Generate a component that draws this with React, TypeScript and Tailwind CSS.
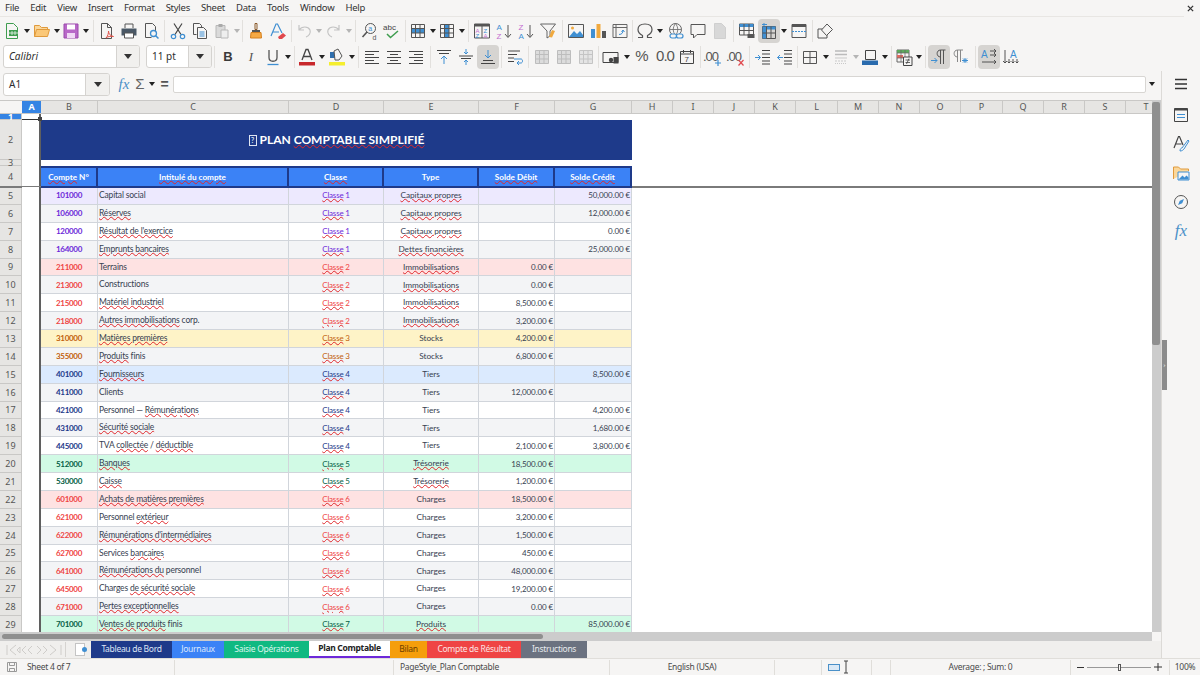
import React from "react";

const BLUE = "#3f8fd2";
const DARK = "#3d3d3d";

// icon frame, 18x18 drawing box
const I = ({ children }: { children: React.ReactNode }) => (
  <svg viewBox="0 0 18 18" className="w-[18px] h-[18px] overflow-visible" fill="none" stroke={DARK} strokeWidth="1">
    {children}
  </svg>
);

const Btn = ({ children, on }: { children: React.ReactNode; on?: boolean }) => (
  <div className={`w-[22px] h-[24px] shrink-0 flex items-center justify-center rounded ${on ? "bg-[#d6d4d1]" : ""}`}>
    {children}
  </div>
);

const Arrow = ({ w = "w-[8px]", off }: { w?: string; off?: boolean }) => (
  <div className={`${w} shrink-0 flex items-center justify-center`}>
    <svg viewBox="0 0 6 4" className="w-[6px] h-[4px]">
      <path d="M0 0h6L3 4z" fill={off ? "#b5b5b5" : "#222"} />
    </svg>
  </div>
);

const Sep = ({ w }: { w: string }) => (
  <div className={`${w} shrink-0 flex justify-center`}>
    <div className="w-px h-[22px] bg-[#e2e0dd]" />
  </div>
);

const Grid = ({ fill, stroke = "#555" }: { fill?: React.ReactNode; stroke?: string }) => (
  <I>
    {fill}
    <path d="M2.5 2.5h13v13h-13zM2.5 6.5h13M2.5 11h13M6.500 2.5v13M11 2.5v13" stroke={stroke} />
  </I>
);

const Lines = ({ d }: { d: string }) => (
  <I>
    <path d={d} stroke="#444" />
  </I>
);

const Toolbar1 = () => (
  <div className="flex items-center h-[27px] pl-[1px]">
    <Btn>
      <I>
        <path d="M3.5 1.5h7l4 4v11h-11z" stroke="#3f9d4f" />
        <path d="M6 8h9v6H6z" fill="#3f9d4f" stroke="none" />
        <path d="M9 9v4M12 9v4M6 11h9" stroke="#fff" strokeWidth=".7" />
      </I>
    </Btn>
    <Arrow />
    <Btn>
      <I>
        <path d="M1.5 14.5v-11h5l2 2h6v2" stroke="#e09a3c" fill="#fbd79a" />
        <path d="M1.5 14.5l2-7h13l-2 7z" stroke="#e09a3c" fill="#fbc878" />
      </I>
    </Btn>
    <Arrow w="w-[7px]" />
    <Btn>
      <I>
        <path d="M2 2h14v14H2z" fill="#b868c8" stroke="#9a48ab" />
        <path d="M5 2.5h8v5H5z" fill="#fff" stroke="none" />
        <path d="M5 11h8v5H5z" fill="#f0d8f5" stroke="none" />
      </I>
    </Btn>
    <Arrow />
    <Sep w="w-[6px]" />
    <Btn>
      <I>
        <path d="M3.5 1.5h6l4 4v11h-10z" stroke="#555" />
        <path d="M9.5 1.5v4h4" stroke="#555" />
        <path d="M8 16c2-2 2.5-5 2.5-7 0 3 2 5 5 5.5-3-.5-6 0-7.5 1.5z" stroke="#e0534a" />
      </I>
    </Btn>
    <Btn>
      <I>
        <path d="M5 6V2h8v4" stroke="#555" />
        <path d="M1.5 6.5h15v7h-15z" fill="#4a5866" stroke="none" />
        <path d="M4.5 11h9v5h-9z" fill="#fff" stroke="#555" />
      </I>
    </Btn>
    <Btn>
      <I>
        <path d="M3.5 1.5h7l3 3v5M3.5 1.5v14h6" stroke="#555" />
        <circle cx="11.5" cy="11.5" r="3" stroke={BLUE} strokeWidth="1.3" />
        <path d="M13.5 13.5l3 3" stroke={BLUE} strokeWidth="1.5" />
      </I>
    </Btn>
    <Sep w="w-[5px]" />
    <Btn>
      <I>
        <path d="M5 1.5l7 11M13 1.5l-7 11" stroke="#444" strokeWidth="1.2" />
        <circle cx="4.5" cy="14.5" r="2.2" stroke={BLUE} strokeWidth="1.2" />
        <circle cx="13.5" cy="14.5" r="2.2" stroke={BLUE} strokeWidth="1.2" />
      </I>
    </Btn>
    <Btn>
      <I>
        <path d="M2.5 1.5h6l2 2v2M2.5 1.5v11h3" stroke="#555" />
        <path d="M6.5 5.5h6l3 3v8h-9z" fill="#f6f5f4" stroke="#555" />
        <path d="M8.5 10h5M8.5 12h5M8.5 14h5" stroke={BLUE} />
      </I>
    </Btn>
    <Btn>
      <I>
        <path d="M3 3.5h9v12H3z" stroke="#b8b8b8" fill="#dadada" />
        <path d="M5.5 2h4v3h-4z" fill="#aaa" stroke="none" />
        <path d="M8 8h7v8H8z" fill="#eee" stroke="#b8b8b8" />
      </I>
    </Btn>
    <Arrow w="w-[7px]" off />
    <Sep w="w-[5px]" />
    <Btn>
      <I>
        <path d="M8 1.5h2v6H8z" stroke="#8a5a2b" />
        <path d="M5 8h8v2H5z" fill="#555" stroke="none" />
        <path d="M4 10.5h10l.5 5.5h-11z" fill="#f6a944" stroke="#d5801f" />
      </I>
    </Btn>
    <Btn>
      <I>
        <path d="M2 14L7 2h1.5L13 11M4 10h6" stroke={BLUE} strokeWidth="1.2" />
        <path d="M9 15l5-4 3 2.5-4 3.5h-3z" fill="#e0484d" stroke="none" />
      </I>
    </Btn>
    <Sep w="w-[4px]" />
    <Btn>
      <I>
        <path d="M4 3v5h5M4 8c3-4 9-4 11 0 1 3-1 6-4 7" stroke="#c4c4c4" strokeWidth="1.2" />
      </I>
    </Btn>
    <Arrow off />
    <Btn>
      <I>
        <path d="M14 3v5H9M14 8C11 4 5 4 3 8c-1 3 1 6 4 7" stroke="#c4c4c4" strokeWidth="1.2" />
      </I>
    </Btn>
    <Arrow w="w-[7px]" off />
    <Sep w="w-[7px]" />
    <Btn>
      <I>
        <circle cx="9.5" cy="6.5" r="5" stroke="#555" />
        <path d="M6 10l-4.500 5" stroke="#555" strokeWidth="1.6" />
        <text x="7.300" y="9" fontSize="7" fill={BLUE} stroke="none" fontFamily="Liberation Sans">a</text>
        <text x="11.5" y="17.5" fontSize="7" fill="#555" stroke="none" fontFamily="Liberation Sans">d</text>
      </I>
    </Btn>
    <Btn>
      <I>
        <text x="0" y="8" fontSize="8" fill="#444" stroke="none" fontFamily="Liberation Sans">abc</text>
        <path d="M4 12l3.5 3.5L15 9" stroke="#3f9d4f" strokeWidth="1.5" />
      </I>
    </Btn>
    <Sep w="w-[4px]" />
    <Btn>
      <Grid fill={<path d="M2.5 6.5h13V11h-13z" fill={BLUE} stroke="none" />} />
    </Btn>
    <Arrow w="w-[7px]" />
    <Btn>
      <Grid fill={<path d="M6.5 2.5H11v13H6.5z" fill={BLUE} stroke="none" />} />
    </Btn>
    <Arrow w="w-[7px]" />
    <Sep w="w-[6px]" />
    <Btn>
      <I>
        <path d="M1.5 2h15v14h-15zM9 2v14" stroke="#555" />
        <path d="M1.5 2h15v2.5h-15z" fill="#555" stroke="none" />
        <text x="2.5" y="10.5" fontSize="6" fill="#c36bd0" stroke="none" fontFamily="Liberation Sans">A</text>
        <text x="2.5" y="15.5" fontSize="6" fill={BLUE} stroke="none" fontFamily="Liberation Sans">Z</text>
        <text x="10.5" y="10.5" fontSize="6" fill={BLUE} stroke="none" fontFamily="Liberation Sans">Z</text>
        <text x="10.5" y="15.5" fontSize="6" fill="#c36bd0" stroke="none" fontFamily="Liberation Sans">A</text>
      </I>
    </Btn>
    <Btn>
      <I>
        <text x="1.5" y="8" fontSize="8" fill={BLUE} stroke="none" fontFamily="Liberation Sans">A</text>
        <text x="1.5" y="16.5" fontSize="8" fill="#c36bd0" stroke="none" fontFamily="Liberation Sans">Z</text>
        <path d="M13 3v12M10 12l3 3.5 3-3.5" stroke="#555" />
      </I>
    </Btn>
    <Btn>
      <I>
        <text x="1.5" y="8" fontSize="8" fill="#c36bd0" stroke="none" fontFamily="Liberation Sans">Z</text>
        <text x="1.5" y="16.5" fontSize="8" fill={BLUE} stroke="none" fontFamily="Liberation Sans">A</text>
        <path d="M13 3v12M10 12l3 3.5 3-3.5" stroke="#555" />
      </I>
    </Btn>
    <Btn>
      <I>
        <path d="M1.5 2h15l-5.500 7v5l-3 2V9z" stroke="#666" />
        <path d="M10 15l3-7 3 1-3 6.500z" fill="#f0a93e" stroke="none" />
      </I>
    </Btn>
    <Sep w="w-[6px]" />
    <Btn>
      <I>
        <path d="M1.5 2.5h15v13h-15z" stroke="#555" />
        <circle cx="5.5" cy="6" r="1.5" fill="#f0a93e" stroke="none" />
        <path d="M2 15l5-6 3 3 3-3 3 4v2z" fill={BLUE} stroke="none" />
      </I>
    </Btn>
    <Btn>
      <I>
        <path d="M2 7h4v9H2z" fill={BLUE} stroke="none" />
        <path d="M7.5 2h4v14h-4z" fill="#f0a93e" stroke="none" />
        <path d="M13 9h4v7h-4z" fill="#555" stroke="none" />
      </I>
    </Btn>
    <Btn>
      <I>
        <path d="M2 2.5h14v13H2zM2 5.5h14M5 2.5v13" stroke="#666" />
        <path d="M8 12.5c3 0 4-2 4-4M10.5 10l1.5-2 1.5 2" stroke={BLUE} />
      </I>
    </Btn>
    <Sep w="w-[3px]" />
    <Btn>
      <I>
        <path d="M2 15.5h4.5v-2C3.5 12 2 10 2 7.5 2 4 5 2 9 2s7 2 7 5.5c0 2.5-1.5 4.5-4.5 6v2H16" stroke="#555" strokeWidth="1.2" />
      </I>
    </Btn>
    <Arrow />
    <div className="w-px shrink-0" />
    <Btn>
      <I>
        <circle cx="8.5" cy="7.5" r="6" stroke="#666" />
        <path d="M2.5 7.5h12M8.5 1.5c-3 4-3 8 0 12M8.5 1.5c3 4 3 8 0 12" stroke="#666" strokeWidth=".8" />
        <rect x="3" y="12" width="6.5" height="4" rx="2" fill="#f6f5f4" stroke={BLUE} strokeWidth="1.2" />
        <rect x="9.5" y="12" width="6.5" height="4" rx="2" fill="#f6f5f4" stroke={BLUE} strokeWidth="1.2" />
      </I>
    </Btn>
    <Btn>
      <I>
        <path d="M2 2.5h14v10H8l-3.5 3.5v-3.5H2z" stroke="#555" />
      </I>
    </Btn>
    <Btn>
      <I>
        <path d="M3.5 1.5h7l4 4v11h-11z" fill="#d8d8d8" stroke="#cfcfcf" />
      </I>
    </Btn>
    <Sep w="w-[5px]" />
    <Btn>
      <I>
        <path d="M1.5 2h14v11h-14z" stroke="#555" />
        <path d="M1.5 2h14v3h-14z" fill={BLUE} stroke="none" />
        <path d="M1.5 8.5h14M6 2v11M11 2v11" stroke="#555" />
        <path d="M9.5 12h7v4h-7z" fill="#555" stroke="none" />
      </I>
    </Btn>
    <Btn on>
      <I>
        <path d="M2.5 4.5h13v12h-13z" stroke="#555" />
        <path d="M2.5 4.5h4v12h-4zM2.5 4.5h13v3h-13z" fill={BLUE} stroke="none" />
        <path d="M2.5 11h13M6.5 4.5v12M11 4.5v12" stroke="#555" />
        <path d="M4 1v3M2 2.5h5" stroke={BLUE} />
      </I>
    </Btn>
    <Arrow w="w-[8px]" />
    <Btn>
      <I>
        <path d="M2 2.5h14v13H2z" stroke="#555" />
        <path d="M2 2.5h14V5H2z" fill="#555" stroke="none" />
        <path d="M2 9.5h14" stroke={BLUE} strokeDasharray="2 1" />
      </I>
    </Btn>
    <Sep w="w-[4px]" />
    <Btn>
      <I>
        <path d="M2 7h9v9H2z" stroke="#555" />
        <path d="M11 2l5.5 5.5-6 6-5-5.500z" fill="#f6f5f4" stroke="#555" />
      </I>
    </Btn>
  </div>
);

const Combo = ({ w, arrowW, label, italic }: { w: string; arrowW: string; label: string; italic?: boolean }) => (
  <div className={`${w} h-[23px] shrink-0 flex bg-white border border-[#d5d3d0] rounded-[3px] overflow-hidden`}>
    <div className={`flex-1 flex items-center pl-[5px] text-[10px] text-[#2e2e2e] ${italic ? "italic" : ""}`}>{label}</div>
    <div className={`${arrowW} bg-[#f1f0ee] border-l border-[#d5d3d0] flex items-center justify-center`}>
      <svg viewBox="0 0 8 5" className="w-[8px] h-[5px]">
        <path d="M0 0h8L4 5z" fill="#333" />
      </svg>
    </div>
  </div>
);

const Toolbar2 = () => (
  <div className="flex items-center h-[25px] pl-[3px]">
    <Combo w="w-[137px]" arrowW="w-[23px]" label="Calibri" italic />
    <div className="w-[6px] shrink-0" />
    <Combo w="w-[66px]" arrowW="w-[23px]" label="11 pt" />
    <Sep w="w-[5px]" />
    <Btn><span className="text-[13px] font-bold text-[#3a3a3a] font-['Liberation_Sans',sans-serif]">B</span></Btn>
    <div className="w-px shrink-0" />
    <Btn><span className="text-[13px] italic text-[#555] font-['Liberation_Serif',serif]">I</span></Btn>
    <Btn>
      <I>
        <path d="M5 2v7.5c0 5 8 5 8 0V2" stroke="#555" strokeWidth="1.3" />
        <path d="M3.5 16.5h11" stroke={BLUE} strokeWidth="1.3" />
      </I>
    </Btn>
    <Arrow />
    <Sep w="w-[4px]" />
    <Btn>
      <I>
        <path d="M4 12L8 1.5h2L14 12M5.5 8.5h7" stroke="#444" strokeWidth="1.3" />
        <path d="M1 14h16v3.5H1z" fill="#c8282c" stroke="none" />
      </I>
    </Btn>
    <Arrow />
    <Btn>
      <I>
        <path d="M2 4h5v6H2z" fill="#2f6fae" stroke="none" />
        <path d="M6 3l4-2 4 7-3 4H7z" fill="#f6f5f4" stroke="#555" />
        <path d="M1 14h16v3.5H1z" fill="#f5ee2e" stroke="none" />
      </I>
    </Btn>
    <Arrow />
    <Sep w="w-[5px]" />
    <Btn><Lines d="M2 3.5h14M2 6.5h9M2 9.5h14M2 12.5h9M2 15.5h14" /></Btn>
    <Btn><Lines d="M2 3.5h14M5 6.5h8M2 9.5h14M5 12.5h8M2 15.5h14" /></Btn>
    <Btn><Lines d="M2 3.5h14M7 6.5h9M2 9.5h14M7 12.5h9M2 15.5h14" /></Btn>
    <Sep w="w-[6px]" />
    <Btn>
      <I>
        <path d="M2 2.5h14M4 5.5h10" stroke="#444" />
        <path d="M9 16V8M6 11l3-3 3 3" stroke={BLUE} />
      </I>
    </Btn>
    <Btn>
      <I>
        <path d="M2 8h14M4 10.5h10" stroke="#444" />
        <path d="M9 1v5M7 4l2 2 2-2M9 17v-5M7 14l2-2 2 2" stroke={BLUE} />
      </I>
    </Btn>
    <Btn on>
      <I>
        <path d="M2 15.5h14M4 12.5h10" stroke="#444" />
        <path d="M9 2v8M6 7l3 3 3-3" stroke={BLUE} />
      </I>
    </Btn>
    <Sep w="w-[5px]" />
    <Btn>
      <I>
        <path d="M2 3h12M2 6.5h9M2 10h6M2 13.5h6" stroke="#444" />
        <path d="M8 11h7c2 0 2 4 0 4h-3M13 13l-2 2 2 2" stroke={BLUE} />
      </I>
    </Btn>
    <Sep w="w-[5px]" />
    <Btn><Grid stroke="#bdbdbd" fill={<path d="M2.5 2.5h13v13h-13z" fill="#dcdcdc" stroke="none" />} /></Btn>
    <Btn><Grid stroke="#bdbdbd" fill={<path d="M2.5 2.5h13v13h-13z" fill="#dcdcdc" stroke="none" />} /></Btn>
    <Btn><Grid stroke="#c4c4c4" fill={<path d="M2.5 2.5h13v13h-13z" fill="#e4e4e4" stroke="none" />} /></Btn>
    <Sep w="w-[3px]" />
    <Btn>
      <I>
        <path d="M1 4.5h15v10H1z" stroke="#444" />
        <circle cx="9" cy="12" r="2.2" fill="#444" stroke="none" />
        <path d="M11.5 9h5v6.5h-5z" fill="#444" stroke="none" />
      </I>
    </Btn>
    <Arrow w="w-[9px]" />
    <Btn><span className="text-[15px] text-[#555] font-['Liberation_Sans',sans-serif]">%</span></Btn>
    <div className="w-px shrink-0" />
    <Btn><span className="text-[15px] text-[#555] font-['Liberation_Sans',sans-serif] tracking-[-1px]">0.0</span></Btn>
    <Btn>
      <I>
        <path d="M2.5 3.5h13v12h-13zM2.5 6h13M5.5 2v3M12.5 2v3" stroke="#444" />
        <text x="6.5" y="14" fontSize="8" fill="#444" stroke="none" fontFamily="Liberation Sans">7</text>
      </I>
    </Btn>
    <Sep w="w-[4px]" />
    <Btn>
      <I>
        <text x="-1" y="13" fontSize="13" letterSpacing="-1" fill="#555" stroke="none" fontFamily="Liberation Sans">.00</text>
        <path d="M14 12v6M11 15h6" stroke={BLUE} strokeWidth="1.2" />
      </I>
    </Btn>
    <div className="w-px shrink-0" />
    <Btn>
      <I>
        <text x="-1" y="13" fontSize="13" letterSpacing="-1" fill="#555" stroke="none" fontFamily="Liberation Sans">.00</text>
        <path d="M11.5 12l5 5.5M16.5 12l-5 5.5" stroke="#e0484d" strokeWidth="1.2" />
      </I>
    </Btn>
    <Sep w="w-[5px]" />
    <Btn>
      <I>
        <path d="M8 2.5h8M8 6h8M8 9.5h8M8 13h8M8 16h8" stroke="#444" />
        <path d="M1 9.5h5M4 7l2.5 2.5L4 12" stroke={BLUE} />
      </I>
    </Btn>
    <Btn>
      <I>
        <path d="M8 2.5h8M8 6h8M8 9.5h8M8 13h8M8 16h8" stroke="#444" />
        <path d="M7 9.5H1.5M4 7L1.5 9.5 4 12" stroke={BLUE} />
      </I>
    </Btn>
    <Sep w="w-[3px]" />
    <Btn>
      <I>
        <path d="M2.5 3.5h13v12h-13zM9 3.5v12M2.5 9.5h13" stroke="#555" />
      </I>
    </Btn>
    <Arrow w="w-[9px]" />
    <Btn>
      <I>
        <path d="M3 3h12M3 6.5h12" stroke="#bbb" strokeWidth="1.5" />
        <path d="M3 10h12" stroke="#c9c9c9" />
        <path d="M3 13h12" stroke="#c9c9c9" strokeDasharray="2 1" />
        <path d="M3 15.5h12" stroke="#c9c9c9" strokeDasharray="1 1" />
      </I>
    </Btn>
    <Arrow w="w-[7px]" off />
    <Btn>
      <I>
        <path d="M4.5 2.5h10v9h-10z" stroke="#444" />
        <path d="M1 12.5h16V17H1z" fill="#2a6bad" stroke="none" />
      </I>
    </Btn>
    <Arrow />
    <Sep w="w-[4px]" />
    <Btn>
      <I>
        <path d="M2 2h12v12H2z" stroke="#666" />
        <path d="M2 2h12v3H2z" fill="#5caa5c" stroke="none" />
        <path d="M2 7h6v3H2z" fill="#e06a60" stroke="none" />
        <path d="M2 5h12M2 10h12M6 2v12M10 2v12" stroke="#666" strokeWidth=".7" />
        <path d="M8.5 9H17v8.5H8.5z" fill="#f6f5f4" stroke="#444" />
        <path d="M10.5 12H15M10.5 14.5H15M14 10.5L11.5 16" stroke="#444" strokeWidth=".8" />
      </I>
    </Btn>
    <Arrow />
    <Sep w="w-[5px]" />
    <Btn on>
      <I>
        <path d="M10.5 2v14M13.5 2v14M15.5 2h-5C6 2 6 9 10.5 9" stroke="#555" />
        <path d="M1 12.5h6M4.5 10L7 12.5 4.5 15" stroke={BLUE} />
      </I>
    </Btn>
    <Btn>
      <I>
        <path d="M5.5 2v12M8.5 2v12M11 2H5.5C1 2 1 9 5.500 9" stroke="#888" />
        <path d="M10 12.5h6M13 10v5M11 10.5l4 4M15 10.5l-4 4" stroke={BLUE} />
      </I>
    </Btn>
    <Sep w="w-[6px]" />
    <Btn on>
      <I>
        <text x="1" y="9.5" fontSize="10" fill={BLUE} stroke="none" fontFamily="Liberation Sans">A</text>
        <path d="M10 3h6M10 7h6M14 1l2 2-2 2M14 5l2 2-2 2M2 14h14M14 12l2 2-2 2" stroke="#444" strokeWidth=".9" />
      </I>
    </Btn>
    <Btn>
      <I>
        <text x="8" y="9.5" fontSize="10" fill={BLUE} stroke="none" fontFamily="Liberation Sans">A</text>
        <path d="M3 2v13M1 13l2 2 2-2M7 11v4M5.5 13.5L7 15l1.5-1.5M11 11v4M9.5 13.5L11 15l1.5-1.5M15 11v4M13.5 13.5L15 15l1.5-1.5" stroke="#444" strokeWidth=".9" />
      </I>
    </Btn>
  </div>
);

const FormulaBar = () => (
  <div className="flex items-center h-[26px] pl-[3px] mt-[2px]">
    <Combo w="w-[107px]" arrowW="w-[24px]" label="A1" />
    <div className="w-[6px] shrink-0" />
    <span className="w-[16px] text-center text-[15px] italic text-[#4a90c8] font-['Liberation_Serif',serif]">fx</span>
    <span className="w-[16px] text-center text-[15px] text-[#666] font-['Liberation_Sans',sans-serif]">Σ</span>
    <Arrow />
    <span className="w-[17px] text-center text-[14px] font-bold text-[#555] font-['Liberation_Sans',sans-serif]">=</span>
    <div className="w-[973px] h-[17px] bg-white border border-[#d8d6d3] rounded-[2px]" />
    <Arrow w="w-[12px]" />
  </div>
);

// *...* marks the words the spell checker has underlined
const Spell = ({ text }: { text: string }) => (
  <span>
    {text.split("*").map((part, i) =>
      i % 2 ? (
        <span key={i} className="underline decoration-wavy decoration-[#e0282c] decoration-1 underline-offset-[0px]">
          {part}
        </span>
      ) : (
        part
      )
    )}
  </span>
);

type Rec = { n: number; code: string; label: string; cl: string; type: string; deb: string; cred: string; bg: string; color: string };

const VIOLET = "text-[#6d28d9]";
const RED = "text-[#ef4444]";
const AMBER = "text-[#c2610c]";
const NAVY = "text-[#1e3a8a]";
const GREEN = "text-[#065f46]";
const ALT = "bg-[#f3f4f6]";
const W = "bg-white";

const rows: Rec[] = [
  { n: 5, code: "101000", label: "Capital social", cl: "1", type: "*Capitaux propres*", deb: "", cred: "50,000.00 €", bg: "bg-[#ede9fe]", color: VIOLET },
  { n: 6, code: "106000", label: "*Réserves*", cl: "1", type: "*Capitaux propres*", deb: "", cred: "12,000.00 €", bg: ALT, color: VIOLET },
  { n: 7, code: "120000", label: "*Résultat de l'exercice*", cl: "1", type: "*Capitaux propres*", deb: "", cred: "0.00 €", bg: W, color: VIOLET },
  { n: 8, code: "164000", label: "*Emprunts bancaires*", cl: "1", type: "*Dettes financières*", deb: "", cred: "25,000.00 €", bg: ALT, color: VIOLET },
  { n: 9, code: "211000", label: "Terrains", cl: "2", type: "*Immobilisations*", deb: "0.00 €", cred: "", bg: "bg-[#fee2e2]", color: RED },
  { n: 10, code: "213000", label: "Constructions", cl: "2", type: "*Immobilisations*", deb: "0.00 €", cred: "", bg: ALT, color: RED },
  { n: 11, code: "215000", label: "*Matériel industriel*", cl: "2", type: "*Immobilisations*", deb: "8,500.00 €", cred: "", bg: W, color: RED },
  { n: 12, code: "218000", label: "*Autres immobilisations* corp.", cl: "2", type: "*Immobilisations*", deb: "3,200.00 €", cred: "", bg: ALT, color: RED },
  { n: 13, code: "310000", label: "*Matières premières*", cl: "3", type: "Stocks", deb: "4,200.00 €", cred: "", bg: "bg-[#fef3c7]", color: AMBER },
  { n: 14, code: "355000", label: "*Produits* finis", cl: "3", type: "Stocks", deb: "6,800.00 €", cred: "", bg: ALT, color: AMBER },
  { n: 15, code: "401000", label: "*Fournisseurs*", cl: "4", type: "Tiers", deb: "", cred: "8,500.00 €", bg: "bg-[#dbeafe]", color: NAVY },
  { n: 16, code: "411000", label: "Clients", cl: "4", type: "Tiers", deb: "12,000.00 €", cred: "", bg: ALT, color: NAVY },
  { n: 17, code: "421000", label: "Personnel — *Rémunérations*", cl: "4", type: "Tiers", deb: "", cred: "4,200.00 €", bg: W, color: NAVY },
  { n: 18, code: "431000", label: "*Sécurité sociale*", cl: "4", type: "Tiers", deb: "", cred: "1,680.00 €", bg: ALT, color: NAVY },
  { n: 19, code: "445000", label: "TVA *collectée* / *déductible*", cl: "4", type: "Tiers", deb: "2,100.00 €", cred: "3,800.00 €", bg: W, color: NAVY },
  { n: 20, code: "512000", label: "*Banques*", cl: "5", type: "*Trésorerie*", deb: "18,500.00 €", cred: "", bg: "bg-[#d1fae5]", color: GREEN },
  { n: 21, code: "530000", label: "*Caisse*", cl: "5", type: "*Trésorerie*", deb: "1,200.00 €", cred: "", bg: W, color: GREEN },
  { n: 22, code: "601000", label: "*Achats de matières premières*", cl: "6", type: "Charges", deb: "18,500.00 €", cred: "", bg: "bg-[#fee2e2]", color: RED },
  { n: 23, code: "621000", label: "Personnel *extérieur*", cl: "6", type: "Charges", deb: "3,200.00 €", cred: "", bg: W, color: RED },
  { n: 24, code: "622000", label: "*Rémunérations d'intermédiaires*", cl: "6", type: "Charges", deb: "1,500.00 €", cred: "", bg: ALT, color: RED },
  { n: 25, code: "627000", label: "Services *bancaires*", cl: "6", type: "Charges", deb: "450.00 €", cred: "", bg: W, color: RED },
  { n: 26, code: "641000", label: "*Rémunérations du* personnel", cl: "6", type: "Charges", deb: "48,000.00 €", cred: "", bg: ALT, color: RED },
  { n: 27, code: "645000", label: "Charges *de sécurité sociale*", cl: "6", type: "Charges", deb: "19,200.00 €", cred: "", bg: W, color: RED },
  { n: 28, code: "671000", label: "*Pertes exceptionnelles*", cl: "6", type: "Charges", deb: "0.00 €", cred: "", bg: ALT, color: RED },
  { n: 29, code: "701000", label: "*Ventes de produits* finis", cl: "7", type: "*Produits*", deb: "", cred: "85,000.00 €", bg: "bg-[#d1fae5]", color: GREEN },
];

const columns: [string, string][] = [
  ["B", "w-[57px]"],
  ["C", "w-[191px]"],
  ["D", "w-[95px]"],
  ["E", "w-[95px]"],
  ["F", "w-[76px]"],
  ["G", "w-[77px]"],
  ["H", "w-[41px]"],
  ["I", "w-[41px]"],
  ["J", "w-[41px]"],
  ["K", "w-[41px]"],
  ["L", "w-[42px]"],
  ["M", "w-[41px]"],
  ["N", "w-[41px]"],
  ["O", "w-[41px]"],
  ["P", "w-[42px]"],
  ["Q", "w-[41px]"],
  ["R", "w-[41px]"],
  ["S", "w-[41px]"],
  ["T", "w-[41px]"],
];

const RowHead = ({ n, on, h }: { n: number; on?: boolean; h: string }) => (
  <div
    className={`w-[22px] ${h} shrink-0 flex items-center justify-center border-b border-r border-[#c9c8c6] text-[9px] leading-none ${
      on ? "bg-[#3584e4] text-white font-bold" : "bg-[#e6e5e3] text-[#555]"
    }`}
  >
    {n}
  </div>
);

const ColA = ({ h, selected }: { h: string; selected?: boolean }) => (
  <div className={`w-[19px] ${h} shrink-0 bg-white border-r-2 border-[#5f5f5f] relative ${selected ? "border-b border-b-[#333]" : ""}`}>
    {selected && <div className="absolute right-[-3px] bottom-[-2px] w-[4px] h-[4px] bg-[#444] z-20" />}
  </div>
);

const Cell = ({ w, bg, className, children }: { w: string; bg: string; className?: string; children?: React.ReactNode }) => (
  <div className={`${w} ${bg} shrink-0 h-full flex items-center border-r border-b border-[#d1d5db] whitespace-nowrap overflow-hidden ${className ?? ""}`}>
    {children}
  </div>
);

const HeadCell = ({ w, children }: { w: string; children: React.ReactNode }) => (
  <div className={`${w} shrink-0 h-full flex items-center justify-center bg-[#3b82f6] border-r-2 border-y-2 border-[#1e3a8a] text-white font-bold`}>
    {children}
  </div>
);

const Sheet = () => (
  <div className="w-[1152px] h-[532px] bg-white overflow-hidden font-['Noto_Sans',sans-serif]">
    <div className="flex h-[14px] bg-[#e6e5e3] border-y border-[#c9c8c6]">
      <div className="w-[22px] shrink-0 bg-[#f6f5f4]" />
      <div className="w-[19px] shrink-0 bg-[#3584e4] text-white font-bold text-[9px] flex items-center justify-center">A</div>
      {columns.map(([name, w]) => (
        <div key={name} className={`${w} shrink-0 flex items-center justify-center border-r border-[#c9c8c6] text-[9px] text-[#555]`}>
          {name}
        </div>
      ))}
    </div>

    <div className="flex h-[6px]">
      <RowHead n={1} on h="h-[6px]" />
      <ColA h="h-[6px]" selected />
    </div>

    <div className="flex h-[40px]">
      <RowHead n={2} h="h-[40px]" />
      <ColA h="h-[40px]" />
      <div className="w-[591px] bg-[#1e3a8a] flex items-center justify-center gap-[3px] text-white font-bold text-[12px] font-[Lato,sans-serif]">
        <span className="w-[8px] h-[11px] border border-[#dfe5f2] text-[#dfe5f2] text-[7px] leading-[9px] text-center">?</span>
        <Spell text="PLAN *COMPTABLE SIMPLIFIÉ*" />
      </div>
    </div>

    <div className="flex h-[6px]">
      <RowHead n={3} h="h-[6px]" />
      <ColA h="h-[6px]" />
    </div>

    <div className="flex h-[21px] relative">
      <RowHead n={4} h="h-[21px]" />
      <ColA h="h-[21px]" />
      <div className="absolute left-0 right-0 top-[20px] h-[2px] bg-[#7a7a7a]" />
      <div className="flex h-[22px] relative z-10 text-[8.2px] font-[Lato,sans-serif]">
        <HeadCell w="w-[57px]"><Spell text="*Compte* N°" /></HeadCell>
        <HeadCell w="w-[191px]"><Spell text="*Intitulé du compte*" /></HeadCell>
        <HeadCell w="w-[95px]"><Spell text="*Classe*" /></HeadCell>
        <HeadCell w="w-[95px]">Type</HeadCell>
        <HeadCell w="w-[76px]"><Spell text="*Solde Débit*" /></HeadCell>
        <HeadCell w="w-[77px]"><Spell text="*Solde Crédit*" /></HeadCell>
      </div>
    </div>

    {rows.map((r) => (
      <div key={r.n} className="flex h-[17.875px]">
        <RowHead n={r.n} h="h-full" />
        <ColA h="h-full" />
        <div className="flex h-full text-[#374151] font-[Lato,sans-serif]">
          <Cell w="w-[57px]" bg={r.bg} className={`justify-center font-bold text-[8px] tracking-[-0.3px] ${r.color}`}>{r.code}</Cell>
          <Cell w="w-[191px]" bg={r.bg} className="pl-[1px] text-[8.5px] tracking-[-0.18px]"><Spell text={r.label} /></Cell>
          <Cell w="w-[95px]" bg={r.bg} className={`justify-center text-[8px] tracking-[-0.2px] ${r.color}`}><Spell text={`*Classe* ${r.cl}`} /></Cell>
          <Cell w="w-[95px]" bg={r.bg} className="justify-center text-[8.3px] tracking-[-0.05px]"><Spell text={r.type} /></Cell>
          <Cell w="w-[76px]" bg={r.bg} className="justify-end pr-[1px] text-[8px] tracking-[-0.1px]">{r.deb}</Cell>
          <Cell w="w-[77px]" bg={r.bg} className="justify-end pr-[1px] text-[8px] tracking-[-0.1px]">{r.cred}</Cell>
        </div>
      </div>
    ))}
  </div>
);

const Sidebar = () => (
  <div className="w-[39px] shrink-0 -mt-[29px] pt-[5px] flex flex-col items-center border-l border-[#dcdad7] relative">
    <svg viewBox="0 0 16 16" className="w-[16px] h-[16px] mb-[14px]">
      <path d="M2 3.5h12M2 8h12M2 12.5h12" stroke="#333" strokeWidth="1.5" />
    </svg>
    <div className="flex flex-col gap-[11px]">
      <svg viewBox="0 0 18 18" className="w-[18px] h-[18px]" fill="none">
        <path d="M2.5 2.5h13v13h-13z" stroke="#444" />
        <path d="M2.5 2.5h13v2h-13z" fill="#444" />
        <path d="M5 8.5h8M5 11.5h8" stroke={BLUE} />
      </svg>
      <svg viewBox="0 0 18 18" className="w-[18px] h-[18px]" fill="none">
        <path d="M2 13L6.5 1.5h1L11 10M3.5 9h6" stroke="#444" strokeWidth="1.2" />
        <path d="M8 16c0-2 1-3 2-3l6-8 1 1-5 8c-1 1-2 2-4 2z" stroke={BLUE} />
      </svg>
      <svg viewBox="0 0 18 18" className="w-[18px] h-[18px]" fill="none">
        <path d="M1.5 15V3h5l2 2h8v2" stroke="#e09a3c" fill="#fbd79a" />
        <path d="M6 8h11v8H6z" fill="#f6f5f4" stroke={BLUE} />
        <path d="M6.5 15.5l4-4 2 2 2-2 2 2v2z" fill={BLUE} />
      </svg>
      <svg viewBox="0 0 18 18" className="w-[18px] h-[18px]" fill="none">
        <circle cx="9" cy="9" r="6.5" stroke="#555" />
        <path d="M12 6l-1.800 4.200L6 12l1.800-4.200z" fill={BLUE} />
      </svg>
      <span className="text-[17px] leading-[18px] italic text-[#4a90c8] font-['Liberation_Serif',serif] text-center">fx</span>
    </div>
    <div className="absolute left-0 top-[269px] w-[5px] h-[50px] bg-[#8c8c8c] flex items-center justify-center">
      <span className="text-white text-[6px] leading-none">›</span>
    </div>
  </div>
);

const tabs = [
  { name: "Tableau de Bord", w: "w-[81px]", c: "bg-[#1e3a8a] text-[#dfe5f5]" },
  { name: "Journaux", w: "w-[52px]", c: "bg-[#3b82f6] text-[#dbe8fd]" },
  { name: "Saisie Opérations", w: "w-[85px]", c: "bg-[#10b981] text-[#dcf7ee]" },
  { name: "Plan Comptable", w: "w-[81px]", c: "bg-white text-[#222] font-bold border-b-2 border-[#6d28d9]" },
  { name: "Bilan", w: "w-[37px]", c: "bg-[#f59e0b] text-[#6b3d00]" },
  { name: "Compte de Résultat", w: "w-[94px]", c: "bg-[#ef4444] text-[#fde3e3]" },
  { name: "Instructions", w: "w-[66px]", c: "bg-[#6b7280] text-[#e8eaed]" },
];

const TabBar = () => (
  <div className="flex items-center h-[17px] bg-[#f0efed] text-[8.5px] tracking-[-0.3px] font-['Noto_Sans',sans-serif]">
    <div className="w-[66px] shrink-0 pl-[6px] border-r border-[#d5d3d0] h-[15px] flex items-center">
      <svg viewBox="0 0 58 12" className="w-[58px] h-[12px]" fill="none" stroke="#cfcdca">
        <path d="M1 1v10M10 1L4 6l6 5M11 6l3-3v6zM20 2l-4 4 4 4M26 2l-4 4 4 4M31 2l4 4-4 4M37 2l4 4-4 4M44 1l6 5-6 5M55 1v10" />
      </svg>
    </div>
    <div className="w-[25px] shrink-0 pl-[9px] flex items-center">
      <div className="w-[10px] h-[13px] bg-white border border-[#c4c4c4]" />
      <div className="w-[5px] h-[5px] rounded-full bg-[#3f8fd2] -ml-[3px]" />
    </div>
    {tabs.map((t) => (
      <div key={t.name} className={`${t.w} ${t.c} shrink-0 h-full flex items-center justify-center whitespace-nowrap`}>
        {t.name}
      </div>
    ))}
  </div>
);

const StatusCell = ({ w, children, className }: { w: string; children?: React.ReactNode; className?: string }) => (
  <div className={`${w} shrink-0 h-[15px] flex items-center whitespace-nowrap border-r border-[#e0deda] ${className ?? ""}`}>
    {children}
  </div>
);

const StatusBar = () => (
  <div className="flex items-center h-[17px] border-t border-[#e0deda] text-[8.5px] tracking-[-0.3px] text-[#4a4a4a] font-['Noto_Sans',sans-serif]">
    <StatusCell w="w-[175px]" className="pl-[6px] gap-[9px]">
      <svg viewBox="0 0 12 12" className="w-[12px] h-[12px]" fill="none" stroke="#999">
        <path d="M1.5 1.5h9v9h-9zM3.5 1.5v3h5v-3M3.5 10.5v-3h5v3" />
      </svg>
      Sheet 4 of 7
    </StatusCell>
    <StatusCell w="w-[219px]" />
    <StatusCell w="w-[216px]" className="pl-[6px]">PageStyle_Plan Comptable</StatusCell>
    <StatusCell w="w-[165px]" className="justify-center">English (USA)</StatusCell>
    <StatusCell w="w-[47px]" />
    <StatusCell w="w-[50px]" className="pl-[6px] gap-[3px]">
      <div className="w-[12px] h-[7px] bg-[#dbe9f6] border border-[#4a90c8]" />
      <svg viewBox="0 0 6 14" className="w-[6px] h-[14px]" fill="none" stroke="#444">
        <path d="M1 1h4M1 13h4M3 1v12" />
      </svg>
    </StatusCell>
    <StatusCell w="w-[19px]" />
    <StatusCell w="w-[180px]" className="justify-center">Average: ; Sum: 0</StatusCell>
    <StatusCell w="w-[99px]" className="pl-[6px] gap-[3px]">
      <span className="w-[7px] h-px bg-[#333]" />
      <span className="w-[64px] h-px bg-[#999] flex items-center justify-center">
        <span className="w-[3px] h-[7px] border border-[#555] bg-[#f6f5f4]" />
      </span>
      <svg viewBox="0 0 8 8" className="w-[8px] h-[8px]" fill="none" stroke="#333">
        <path d="M4 0v8M0 4h8" />
      </svg>
    </StatusCell>
    <div className="flex-1 text-center">100%</div>
  </div>
);

export default function App() {
  return (
    <div className="w-[1200px] h-[675px] overflow-hidden bg-[#f6f5f4] flex flex-col font-['Noto_Sans',sans-serif]">
      {/* Menu bar */}
      <div className="flex items-center h-[17px] pl-[5px] pr-[6px] border-b border-[#e8e6e3] text-[9.5px] tracking-[-0.25px] text-[#333] mr-[16px]">
        <div className="flex gap-[11px] flex-1">
          {["File", "Edit", "View", "Insert", "Format", "Styles", "Sheet", "Data", "Tools", "Window", "Help"].map((m) => (
            <span key={m}>{m}</span>
          ))}
        </div>
        <svg viewBox="0 0 8 8" className="w-[7px] h-[7px] -mr-[16px]" fill="none" stroke="#333" strokeWidth="1.5">
          <path d="M1 1l6 6M7 1L1 7" />
        </svg>
      </div>

      <Toolbar1 />
      <Toolbar2 />
      <FormulaBar />
      <div className="h-[3px] shrink-0" />

      <div className="flex h-[558px]">
        <div className="w-[1161px] flex flex-col">
          <div className="flex h-[532px]">
            <Sheet />
            <div className="w-[9px] bg-[#cccccc] pt-[2px]">
              <div className="w-[8px] h-[243px] bg-[#8f8f8f] rounded-[2px]" />
            </div>
          </div>
          <div className="h-[9px] w-[1152px] bg-[#cccccc] py-[2px] pl-[2px]">
            <div className="w-[541px] h-full bg-[#8f8f8f] rounded-[3px]" />
          </div>
          <TabBar />
        </div>
        <Sidebar />
      </div>

      <StatusBar />
    </div>
  );
}
